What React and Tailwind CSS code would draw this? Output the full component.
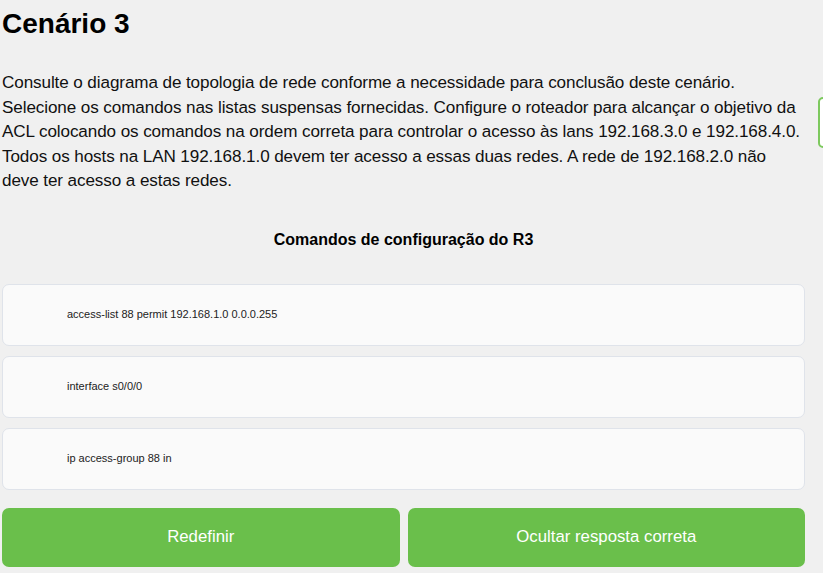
import React from "react";

const commands = [
    "access-list 88 permit 192.168.1.0 0.0.0.255",
    "interface s0/0/0",
    "ip access-group 88 in",
];

const lines = [
    "Consulte o diagrama de topologia de rede conforme a necessidade para conclusão deste cenário.",
    "Selecione os comandos nas listas suspensas fornecidas. Configure o roteador para alcançar o objetivo da",
    "ACL colocando os comandos na ordem correta para controlar o acesso às lans 192.168.3.0 e 192.168.4.0.",
    "Todos os hosts na LAN 192.168.1.0 devem ter acesso a essas duas redes. A rede de 192.168.2.0 não",
    "deve ter acesso a estas redes.",
];

const App = () => {
    return (
        <div className="relative min-h-[573px] bg-[#f0f0f0] overflow-hidden" style={{ fontFamily: '"Liberation Sans", Arial, sans-serif' }}>
            {/* floating tab on the right edge */}
            <div className="absolute left-[818px] top-[97px] w-[30px] h-[51px] rounded-[5px] border-2 border-[#7dc95e] bg-white"></div>

            <div className="w-[805px] pl-[2px]">
                <h1 className="text-[28px] font-bold text-black pt-[8px] leading-[32px]">Cenário 3</h1>

                <div className="mt-[31px] text-[17.1px] leading-[24.5px] text-[#111]">
                    {lines.map((line) => (
                        <p key={line} className="whitespace-nowrap tracking-[-0.1px]">{line}</p>
                    ))}
                </div>

                <h2 className="mt-[34px] text-center text-[16px] font-bold text-black">Comandos de configuração do R3</h2>

                <div className="mt-[32px] flex flex-col gap-[10px]">
                    {commands.map((cmd) => (
                        <div key={cmd} className="h-[62px] flex items-center pl-[64px] bg-[#fafafa] border border-[#dfe3ea] rounded-[7px]">
                            <span className="text-[11px] text-[#222]">{cmd}</span>
                        </div>
                    ))}
                </div>

                <div className="mt-[18px] grid grid-cols-2 gap-[8px]">
                    <button className="h-[59px] rounded-[7px] bg-[#6abf4b] text-white text-[16.8px]">Redefinir</button>
                    <button className="h-[59px] rounded-[7px] bg-[#6abf4b] text-white text-[16.8px]">Ocultar resposta correta</button>
                </div>
            </div>
        </div>
    );
};

export default App;
